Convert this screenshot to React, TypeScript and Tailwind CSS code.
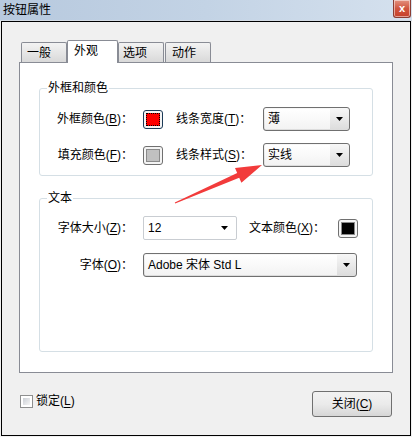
import React from "react";

const Caret = () => (
  <svg width="7" height="4" viewBox="0 0 7 4" className="shrink-0">
    <polygon points="0,0 7,0 3.5,4" fill="#000" />
  </svg>
);

const Key = ({ k }: { k: string }) => (
  <>
    (<u className="underline-offset-[2px]">{k}</u>)
  </>
);

function Swatch({ fill, focus }: { fill: string; focus?: boolean }) {
  return (
    <div
      className={`flex h-[19px] w-[20px] shrink-0 rounded-[3px] border bg-[#f4f4f4] p-[2px] ${
        focus ? "border-[#1c3a57]" : "border-[#707070]"
      }`}
    >
      <div className={`h-full w-full border ${focus ? "border-dotted border-black" : "border-[#8a8a8a]"} ${fill}`} />
    </div>
  );
}

function Select({ value, width }: { value: string; width: string }) {
  return (
    <div
      className={`flex h-[24px] shrink-0 items-center rounded-[3px] border border-[#707070] bg-gradient-to-b from-[#f7f7f7] to-[#dcdcdc] pr-[6px] ${width}`}
    >
      <div className="my-[1px] ml-[1px] mr-[6px] flex h-[20px] flex-1 items-center bg-gradient-to-b from-white to-[#f3f3f3] pl-[3px]">
        {value}
      </div>
      <Caret />
    </div>
  );
}

export default function App() {
  return (
    <div className="relative h-[437px] w-[412px] overflow-hidden bg-[#f0f0f0] font-['Liberation_Sans','Noto_Sans_CJK_SC',sans-serif] text-[12px] leading-[16px] text-black">
      {/* title bar */}
      <div className="flex h-[20px] items-center justify-between bg-gradient-to-r from-[#b7c9de] via-[#c3d3e5] to-[#d5e1ee] pl-[3px] pr-[1px]">
        <span className="text-[12px]">按钮属性</span>
        <div className="flex h-[18px] w-[18px] items-center justify-center self-start rounded-b-[3px] border border-t-0 border-[#8a3d33] bg-gradient-to-b from-[#e3917f] via-[#d0553f] to-[#c7402a] text-[11px] font-bold leading-none text-white shadow-[inset_0_0_0_1px_rgba(255,255,255,0.5)]">
          x
        </div>
      </div>
      <div className="h-[1px] bg-[#d3dbe4]" />

      {/* window frame */}
      <div className="ml-[1px] flex h-[415px] w-[410px] flex-col border border-black">
        {/* tabs */}
        <div className="ml-[19px] mt-[18px] flex h-[22px] items-end">
          <div className="h-[20px] w-[46px] rounded-t-[2px] border border-b-0 border-[#898c95] bg-gradient-to-b from-[#f3f3f3] to-[#d9d9d9] pl-[5px] pt-[2px]">
            一般
          </div>
          <div className="relative z-10 -mb-[1px] h-[23px] w-[51px] rounded-t-[2px] border border-b-0 border-[#898c95] bg-white pl-[6px] pt-[2px]">
            外观
          </div>
          <div className="h-[20px] w-[46px] rounded-t-[2px] border border-b-0 border-[#898c95] bg-gradient-to-b from-[#f3f3f3] to-[#d9d9d9] pl-[4px] pt-[2px]">
            选项
          </div>
          <div className="ml-[1px] h-[20px] w-[46px] rounded-t-[2px] border border-b-0 border-[#898c95] bg-gradient-to-b from-[#f3f3f3] to-[#d9d9d9] pl-[6px] pt-[2px]">
            动作
          </div>
        </div>

        {/* tab panel */}
        <div className="ml-[17px] flex h-[311px] w-[374px] flex-col border border-[#898c95] bg-white">
          <fieldset className="mx-[19px] mt-[17px] rounded-[3px] border border-[#d5dfe5] px-0 pb-[8px]">
            <legend className="ml-[7px] px-[1px] leading-[16px]">外框和颜色</legend>
            <div className="flex flex-col gap-[12px] pt-[11px]">
              <div className="flex h-[24px] items-center">
                <span className="w-[103px] shrink-0 pr-[10px] text-right">
                  外框颜色<Key k="B" />：
                </span>
                <Swatch fill="bg-[#ff0000]" focus />
                <span className="ml-[13px] w-[87px] shrink-0">
                  线条宽度<Key k="T" />：
                </span>
                <Select value="薄" width="w-[87px]" />
              </div>
              <div className="flex h-[24px] items-center">
                <span className="w-[103px] shrink-0 pr-[10px] text-right">
                  填充颜色<Key k="F" />：
                </span>
                <Swatch fill="bg-[#c0c0c0]" />
                <span className="ml-[13px] w-[87px] shrink-0">
                  线条样式<Key k="S" />：
                </span>
                <Select value="实线" width="w-[87px]" />
              </div>
            </div>
          </fieldset>

          <fieldset className="mx-[19px] mt-[14px] h-[162px] rounded-[3px] border border-[#d5dfe5] px-0">
            <legend className="ml-[7px] px-[1px] leading-[16px]">文本</legend>
            <div className="flex flex-col gap-[13px] pt-[10px]">
              <div className="flex h-[24px] items-center">
                <span className="w-[103px] shrink-0 pr-[10px] text-right">
                  字体大小<Key k="Z" />：
                </span>
                <div className="flex h-[24px] w-[94px] shrink-0 items-center justify-between rounded-[2px] border border-[#c9cdd2] bg-white pl-[4px] pr-[8px]">
                  <span>12</span>
                  <Caret />
                </div>
                <span className="ml-[12px] w-[89px] shrink-0">
                  文本颜色<Key k="X" />：
                </span>
                <Swatch fill="bg-black" />
              </div>
              <div className="flex h-[24px] items-center">
                <span className="w-[103px] shrink-0 pr-[10px] text-right">
                  字体<Key k="O" />：
                </span>
                <Select value="Adobe 宋体 Std L" width="w-[214px]" />
              </div>
            </div>
          </fieldset>
        </div>

        {/* bottom */}
        <div className="flex flex-1 items-start justify-between pl-[18px] pr-[18px]">
          <label className="mt-[20px] flex items-center gap-[3px]">
            <span className="h-[13px] w-[13px] border border-[#8e8f8f] bg-white p-[2px]">
              <span className="block h-full w-full bg-gradient-to-br from-[#cbcfd5] to-[#f6f6f6]" />
            </span>
            <span>
              锁定<Key k="L" />
            </span>
          </label>
          <button className="mt-[18px] h-[26px] w-[80px] rounded-[3px] border border-[#707070] bg-gradient-to-b from-[#f2f2f2] via-[#ebebeb] to-[#d6d6d6] text-[12px]">
            关闭<Key k="C" />
          </button>
        </div>
      </div>

      {/* red arrow annotation */}
      <svg className="pointer-events-none absolute left-0 top-0" width="412" height="437">
        <polygon
          points="174.8,202.5 237.2,173.1 235,168.1 262,165 241.4,182.7 239.2,177.7 175.2,203.5"
          fill="#f23b3b"
        />
      </svg>
    </div>
  );
}
